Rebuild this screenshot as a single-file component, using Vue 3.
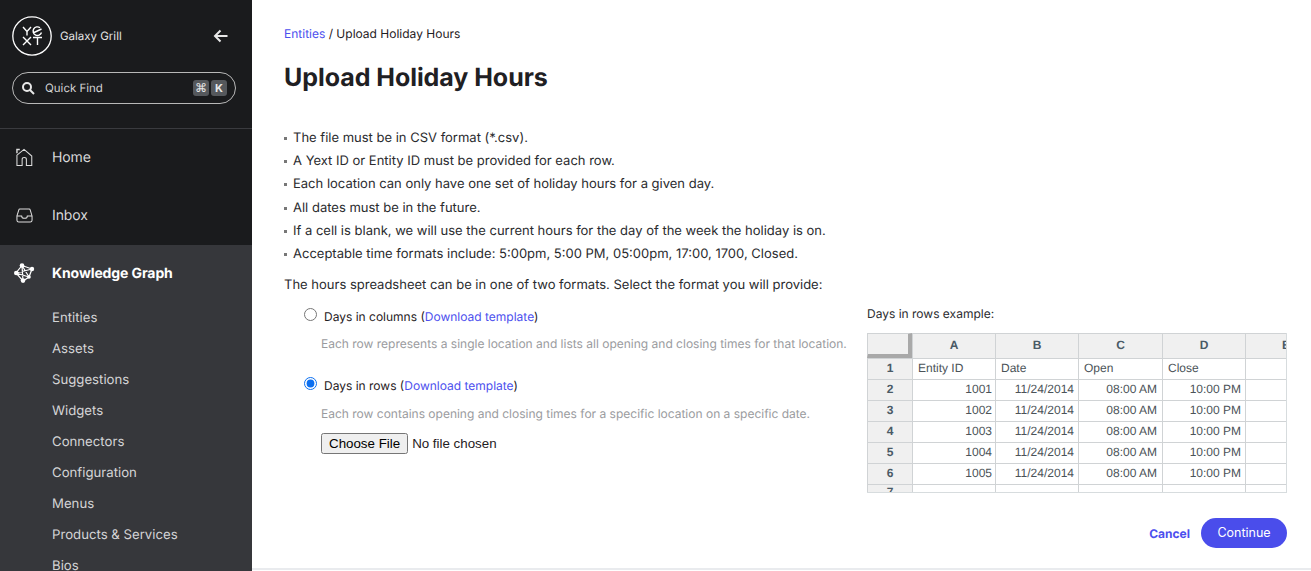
<script setup>
const nav = ['Entities','Assets','Suggestions','Widgets','Connectors','Configuration','Menus','Products & Services','Bios']
const rules = [
  'The file must be in CSV format (*.csv).',
  'A Yext ID or Entity ID must be provided for each row.',
  'Each location can only have one set of holiday hours for a given day.',
  'All dates must be in the future.',
  'If a cell is blank, we will use the current hours for the day of the week the holiday is on.',
  'Acceptable time formats include: 5:00pm, 5:00 PM, 05:00pm, 17:00, 1700, Closed.'
]
const ids = [1001,1002,1003,1004,1005]
</script>

<template>
  <div class="page">
    <aside class="side">
      <div class="top">
        <div class="brand">
          <svg class="logo" width="40" height="40" viewBox="0 0 40 40" fill="none" stroke="#fff">
            <circle cx="20" cy="20" r="19.2" stroke-width="1.3"/>
            <path d="M11 11l4 4.500 4-4.500M15 15.500V19.500" stroke-width="1.4"/>
            <path d="M21 17l8.500-4M29.500 16.500a4.300 4.300 0 1 1-1.500-4.800" stroke-width="1.4"/>
            <path d="M11 21l8 8M19 21l-8 8M21 21.500h9M25.500 21.500V29" stroke-width="1.4"/>
          </svg>
          <span class="biz">Galaxy Grill</span>
          <svg class="back" width="16" height="14" viewBox="0 0 16 14" fill="none" stroke="#e8e8e8" stroke-width="2">
            <path d="M14.500 7H2M7.500 1.500L2 7l5.500 5.500"/>
          </svg>
        </div>
        <div class="find">
          <svg width="14" height="14" viewBox="0 0 14 14" fill="none" stroke="#e8e8e8" stroke-width="2">
            <circle cx="6" cy="6" r="4"/><path d="M9 9l4 4"/>
          </svg>
          <span class="find-t">Quick Find</span>
          <span class="key">⌘</span><span class="key k">K</span>
        </div>
      </div>
      <div class="item">
        <svg class="ic" width="17" height="19" viewBox="0 0 18 19" fill="none" stroke="#ddd" stroke-width="1.100">
          <path d="M1 18V7L8.500 .9 16.700 8V18H11V11.500Q11 9.500 8.800 9.500 6.500 9.500 6.500 11.500V18H1z"/><path d="M1 5V1h3" stroke-width="1.500"/>
        </svg>
        <span>Home</span>
      </div>
      <div class="item">
        <svg class="ic" width="17" height="15" viewBox="0 0 18 15" fill="none" stroke="#ddd" stroke-width="1.100">
          <path d="M1 8L3 1.500Q3.200 .6 4 .6H14Q14.800 .6 15 1.500L17 8V12.500Q17 14.400 15 14.400H3Q1 14.400 1 12.500V8H6Q6 10.500 9 10.500T12 8H17"/>
        </svg>
        <span>Inbox</span>
      </div>
      <div class="group">
        <div class="item active">
          <svg class="ic big" width="21" height="20" viewBox="0 0 21 20" fill="none" stroke="#fff" stroke-width="1.200">
            <path d="M8 2.500L18 6 15 14 9 18 2 10 8 2.500 15 14M8 2.500L9 18M2 10L18 6M2 10L15 14"/>
            <g fill="#fff" stroke="none"><circle cx="8" cy="2.500" r="2.300"/><circle cx="18" cy="6" r="2.200"/><circle cx="2.300" cy="10" r="2.300"/><circle cx="15" cy="14" r="1.800"/><circle cx="9" cy="17.600" r="2.300"/></g>
          </svg>
          <span>Knowledge Graph</span>
        </div>
        <ul class="sub">
          <li v-for="n in nav" :key="n">{{ n }}</li>
        </ul>
      </div>
    </aside>
    <main class="main">
      <div class="crumb"><a>Entities</a> / Upload Holiday Hours</div>
      <h1>Upload Holiday Hours</h1>
      <ul class="rules">
        <li v-for="r in rules" :key="r">{{ r }}</li>
      </ul>
      <p class="lead">The hours spreadsheet can be in one of two formats. Select the format you will provide:</p>
      <div class="cols">
        <div class="opts">
          <label class="opt">
            <input type="radio" name="fmt" />
            <span>Days in columns (<a>Download template</a>)</span>
          </label>
          <p class="hint">Each row represents a single location and lists all opening and closing times for that location.</p>
          <label class="opt second">
            <input type="radio" name="fmt" checked />
            <span>Days in rows (<a>Download template</a>)</span>
          </label>
          <p class="hint">Each row contains opening and closing times for a specific location on a specific date.</p>
          <input class="file" type="file" />
        </div>
        <div class="example">
          <div class="ex-t">Days in rows example:</div>
          <div class="sheet">
            <div class="c corner"></div>
            <div class="c h">A</div><div class="c h">B</div><div class="c h">C</div><div class="c h">D</div><div class="c h e">E</div>
            <div class="c r">1</div>
            <div class="c t">Entity ID</div><div class="c t">Date</div><div class="c t">Open</div><div class="c t">Close</div><div class="c"></div>
            <template v-for="(id, i) in ids" :key="id">
              <div class="c r">{{ i + 2 }}</div>
              <div class="c num n1">{{ id }}</div>
              <div class="c num">11/24/2014</div>
              <div class="c num n3">08:00 AM</div>
              <div class="c num n4">10:00 PM</div>
              <div class="c"></div>
            </template>
            <div class="c r last">7</div>
            <div class="c last"></div><div class="c last"></div><div class="c last"></div><div class="c last"></div><div class="c last"></div>
          </div>
        </div>
      </div>
      <div class="actions">
        <a class="cancel">Cancel</a>
        <button class="go">Continue</button>
      </div>
    </main>
  </div>
</template>

<style>
html, body { margin: 0; background: #fff; overflow: hidden; }
</style>

<style scoped>
.page { display: flex; width: 1311px; height: 571px; overflow: hidden; font-family: Inter, "Liberation Sans", sans-serif; color: #1f2023; text-rendering: geometricPrecision; }
.side { width: 252px; flex: none; background: #1a1b1d; color: #d8d8da; overflow: hidden; }
.top { height: 129px; box-sizing: border-box; padding: 16px 16px 0 12px; border-bottom: 1px solid #3a3b3f; }
.brand { display: flex; align-items: center; height: 40px; }
.logo { flex: none; }
.biz { margin-left: 8px; padding-bottom: 1px; font-size: 11.5px; color: #e4e4e4; }
.back { margin-left: auto; margin-right: 7px; }
.find { margin-top: 16px; height: 32px; width: 224px; box-sizing: border-box; border: 1px solid #b8b8b8; border-radius: 16px; display: flex; align-items: center; padding: 0 2px 1px 8px; }
.find-t { margin-left: 10px; font-size: 11.500px; color: #d4d4d4; flex: 1; }
.key { width: 16px; height: 16px; border-radius: 3px; background: #55585c; color: #e8e8e8; font-size: 12px; font-family: "DejaVu Sans", sans-serif; display: flex; align-items: center; justify-content: center; margin-right: 2px; }
.key.k { font-weight: 700; font-size: 11px; font-family: Inter, sans-serif; margin-right: 6px; }
.item { height: 58px; box-sizing: border-box; padding-bottom: 2px; display: flex; align-items: center; font-size: 14px; letter-spacing: -.1px; padding-left: 16px; }
.item span { margin-left: 19px; }
.ic { flex: none; }
.ic.big { margin-left: -2px; margin-right: -1px; }
.group { background: #36373b; height: 400px; }
.item.active { height: 56px; padding-bottom: 0; color: #fff; font-weight: 700; }
.item.active span { margin-left: 18px; }
.sub { list-style: none; margin: 0; padding: 2px 0 0 52px; font-size: 13.200px; }
.sub li { height: 31px; line-height: 31px; color: #d4d4d6; }

.main { flex: 1; position: relative; padding: 0 24px 0 32px; box-sizing: border-box; border-bottom: 2px solid #e9ebee; height: 570px; font-size: 13px; }
a { color: #4c4fee; }
.crumb { margin-top: 26px; font-size: 12px; line-height: 16px; }
h1 { margin: 20px 0 0; font-size: 25px; letter-spacing: -.05px; line-height: 32px; font-weight: 700; }
.rules { list-style: none; margin: 33px 0 0; padding: 0; color: #2a2b2e; }
.rules li { height: 23.2px; line-height: 23.2px; padding-left: 9px; position: relative; }
.rules li::before { content: ""; position: absolute; left: 0; top: 10px; width: 3px; height: 3px; background: #777; }
.lead { margin: 10px 0 0; line-height: 18px; color: #2a2b2e; }
.cols { display: flex; justify-content: space-between; margin-top: 11px; }
.opts { padding-left: 20px; padding-top: 1px; }
.opt { display: flex; align-items: center; height: 20px; font-size: 12px; }
.opt input { margin: 0 7px 0 0; width: 13px; height: 13px; position: relative; top: -2px; accent-color: #0b6ff0; }
.hint { margin: 10px 0 0 17px; font-size: 12px; line-height: 16px; color: #9a9b9e; white-space: nowrap; }
.second { margin-top: 23px; }
.second + .hint { margin-top: 11px; }
.file { display: block; margin: 11px 0 0 17px; font-family: "Liberation Sans", sans-serif; font-size: 13.333px; }
.example { width: 420px; }
.ex-t { font-size: 12px; line-height: 16px; margin-top: 1px; color: #2a2b2e; }
.sheet { margin-top: 11px; display: grid; grid-template-columns: 45px 83px 83px 84px 83px 42px; grid-template-rows: 25px repeat(6, 21px) 9px; width: 420px; border-right: 1px solid #d7dcde; border-bottom: 1px solid #d7dcde; box-sizing: border-box; font-family: "Liberation Sans", sans-serif; font-size: 12px; color: #4b5358; overflow: hidden; height: 160px; }
.c { border-left: 1px solid #d0d3d5; border-top: 1px solid #d0d3d5; box-sizing: border-box; padding: 0 4px; line-height: 18px; white-space: nowrap; overflow: hidden; }
.t { padding-left: 5px; }
.h { background: #f0f0f0; text-align: center; font-weight: 700; line-height: 23px; color: #4a5a66; }
.h.e { padding-left: 36px; text-align: left; }
.r { background: #f0f0f0; text-align: center; font-weight: 700; padding-right: 4px; color: #4a5a66; }
.corner { background: #f0f0f0; border-right: 4px solid #a9a9a9; border-bottom: 4px solid #a9a9a9; }
.num { text-align: right; }
.n1 { padding-right: 3px; }
.n3 { padding-right: 5px; }
.n4 { padding-right: 4px; }
.last { line-height: 14px; }
.actions { position: absolute; right: 24px; top: 518px; display: flex; align-items: center; }
.cancel { font-size: 12px; font-weight: 700; color: #4c4fee; margin-right: 11px; }
.go { width: 86px; height: 30px; border: 0; border-radius: 15px; background: #4a4deb; color: #fff; font-family: Inter, sans-serif; font-size: 12.500px; padding: 0 0 1px; }
</style>
